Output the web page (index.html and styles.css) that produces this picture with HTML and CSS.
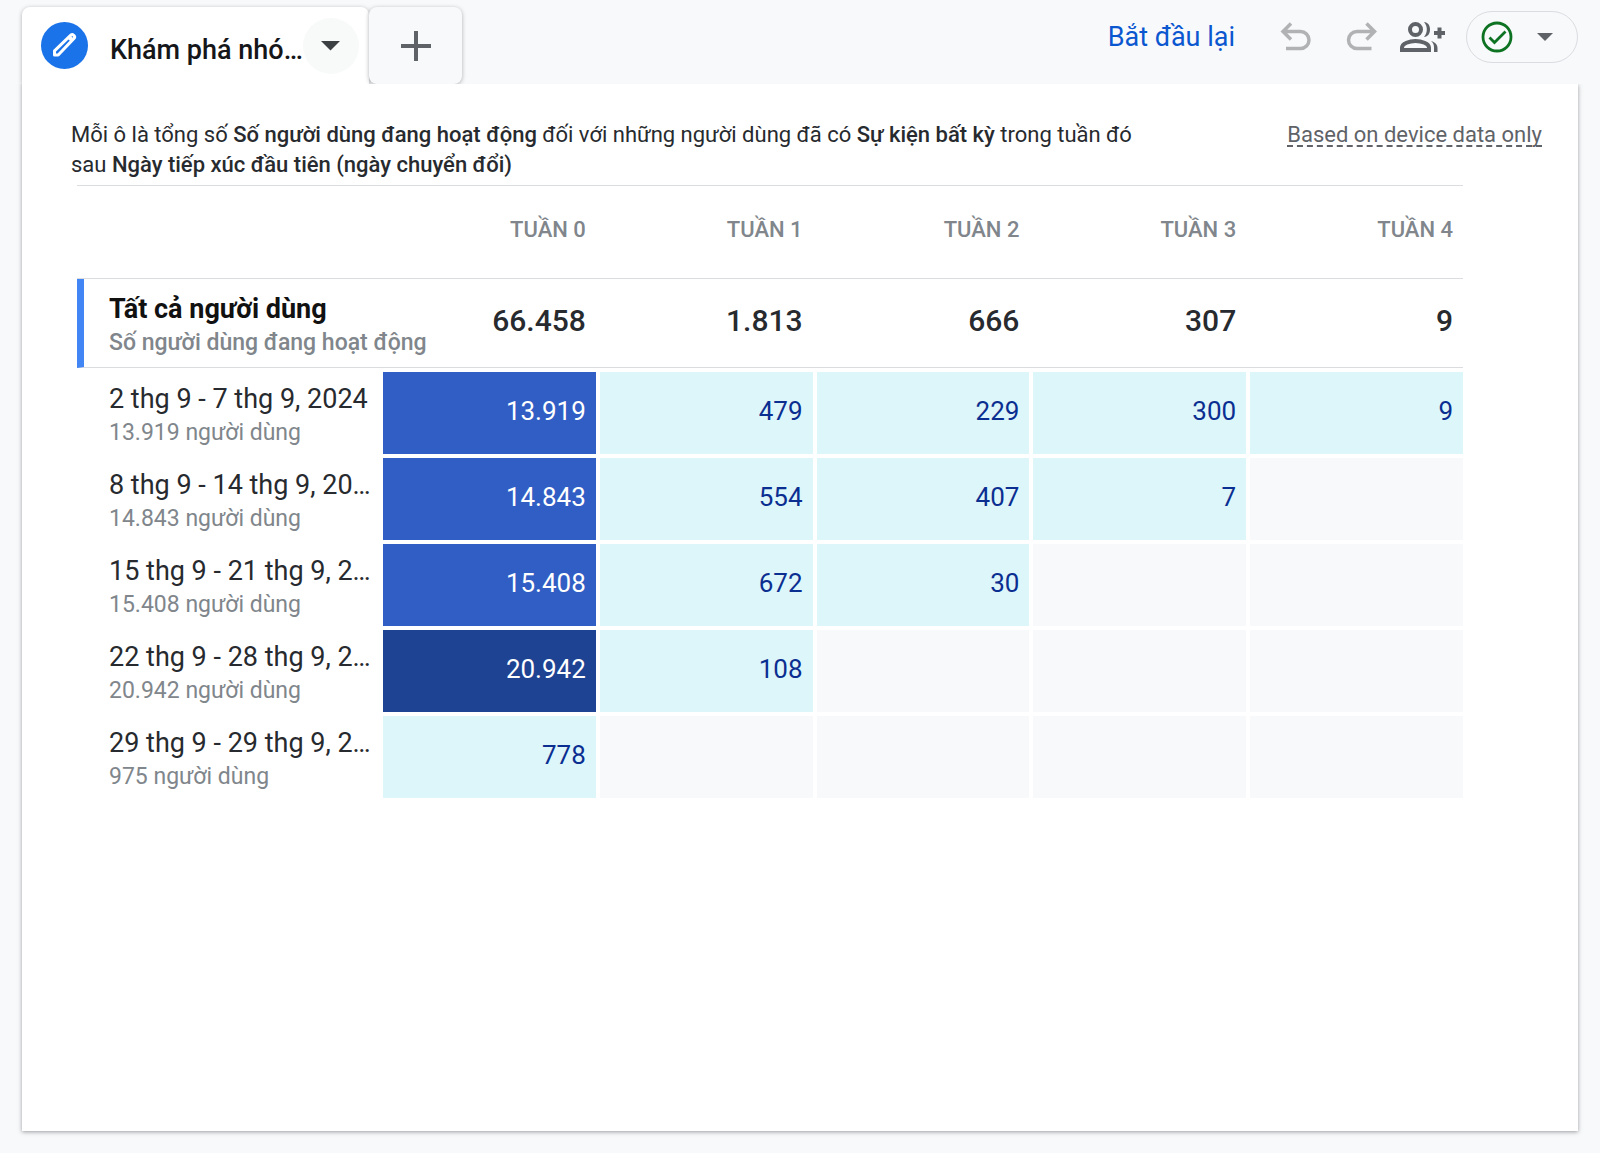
FILE: index.html
```html
<!DOCTYPE html>
<html lang="vi">
<head>
<meta charset="utf-8">
<meta name="viewport" content="width=device-width, initial-scale=1">
<title>Khám phá nhóm</title>
<link rel="stylesheet" href="styles.css">
</head>
<body>
<header class="topbar">
  <nav class="tabs" aria-label="Tab">
    <div class="tab tab-active">
      <span class="tab-badge">
        <svg width="46" height="46" viewBox="0 0 46 46" fill="none" stroke="#fff" stroke-width="3" stroke-linejoin="round" aria-hidden="true">
          <path d="M13.500 33v-4.200L29.800 13.200a2 2 0 0 1 2.800 0l.4.400a2 2 0 0 1 0 2.800L17.200 33z"/>
          <path d="M28 15l3.500 3.500" stroke-width="4"/>
        </svg>
      </span>
      <span class="tab-name">Khám phá nhó…</span>
      <button class="tab-menu" type="button" aria-label="Trình đơn tab">
        <svg width="20" height="10" viewBox="0 0 20 10" aria-hidden="true"><path d="M0 0h19l-9.500 9.500z" fill="#3c4043"/></svg>
      </button>
    </div>
    <button class="tab tab-add" type="button" aria-label="Thêm tab">
      <svg width="30" height="30" viewBox="0 0 30 30" aria-hidden="true"><path d="M15 0v30M0 15h30" stroke="#5f6368" stroke-width="4"/></svg>
    </button>
  </nav>
  <div class="actions">
    <button class="restart" type="button">Bắt đầu lại</button>
    <button class="icon-button" type="button" aria-label="Hoàn tác" disabled>
      <svg width="32" height="32" viewBox="0 0 32 32" fill="none" stroke="#b0b2b4" stroke-width="3.500" aria-hidden="true"><path d="M12 2.500L4 10.500l8 8M4 10.500h17.500a8.500 8.500 0 0 1 0 17H7"/></svg>
    </button>
    <button class="icon-button" type="button" aria-label="Làm lại" disabled>
      <svg width="32" height="32" viewBox="0 0 32 32" fill="none" stroke="#b0b2b4" stroke-width="3.500" aria-hidden="true"><path d="M20.500 2.500l8 8-8 8M28.500 10.500H11a8.500 8.500 0 0 0 0 17h14.500"/></svg>
    </button>
    <button class="icon-button icon-share" type="button" aria-label="Chia sẻ">
      <svg width="46" height="32" viewBox="0 0 46 32" fill="none" stroke="#5f6368" stroke-width="4" aria-hidden="true">
        <circle cx="15.500" cy="8.500" r="5.500"/>
        <path d="M2 29v-2.500c0-4 7.500-6.500 13.500-6.500S29 22.500 29 26.500V29z"/>
        <path d="M24 1c8 0 8 15 0 15 3.800-4.500 3.800-10.500 0-15z" fill="#5f6368" stroke="none"/>
        <path d="M31 20c4.500 1.500 6.500 3.500 6.500 7v4H34v-4.500c0-2.800-1-4.800-3-6.500z" fill="#5f6368" stroke="none"/>
        <path d="M39.500 6.500v11M34 12h11"/>
      </svg>
    </button>
    <button class="status" type="button" aria-label="Trạng thái dữ liệu">
      <svg width="32" height="32" viewBox="0 0 32 32" fill="none" stroke="#0d7322" stroke-width="2.800" aria-hidden="true"><circle cx="16" cy="16" r="14"/><path d="M8.500 16.500l5 5L24.500 10.500"/></svg>
      <svg width="16" height="8" viewBox="0 0 16 8" aria-hidden="true"><path d="M0 0h16l-8 8z" fill="#5f6368"/></svg>
    </button>
  </div>
</header>
<main class="panel">
  <div class="intro">
    <p class="summary">Mỗi ô là tổng số <b>Số người dùng đang hoạt động</b> đối với những người dùng đã có <b>Sự kiện bất kỳ</b> trong tuần đó sau <b>Ngày tiếp xúc đầu tiên (ngày chuyển đổi)</b></p>
    <a class="source" href="#">Based on device data only</a>
  </div>
  <table class="cohort">
    <thead>
      <tr><td></td><th scope="col">TUẦN 0</th><th scope="col">TUẦN 1</th><th scope="col">TUẦN 2</th><th scope="col">TUẦN 3</th><th scope="col">TUẦN 4</th></tr>
    </thead>
    <tbody>
      <tr class="total"><th scope="row"><span class="name">Tất cả người dùng</span><span class="note">Số người dùng đang hoạt động</span></th><td>66.458</td><td>1.813</td><td>666</td><td>307</td><td>9</td></tr>
      <tr class="week"><th scope="row"><span class="name">2 thg 9 - 7 thg 9, 2024</span><span class="note">13.919 người dùng</span></th><td class="high">13.919</td><td class="low">479</td><td class="low">229</td><td class="low">300</td><td class="low">9</td></tr>
      <tr class="week"><th scope="row"><span class="name">8 thg 9 - 14 thg 9, 20…</span><span class="note">14.843 người dùng</span></th><td class="high">14.843</td><td class="low">554</td><td class="low">407</td><td class="low">7</td><td></td></tr>
      <tr class="week"><th scope="row"><span class="name">15 thg 9 - 21 thg 9, 2…</span><span class="note">15.408 người dùng</span></th><td class="high">15.408</td><td class="low">672</td><td class="low">30</td><td></td><td></td></tr>
      <tr class="week"><th scope="row"><span class="name">22 thg 9 - 28 thg 9, 2…</span><span class="note">20.942 người dùng</span></th><td class="peak">20.942</td><td class="low">108</td><td></td><td></td><td></td></tr>
      <tr class="week"><th scope="row"><span class="name">29 thg 9 - 29 thg 9, 2…</span><span class="note">975 người dùng</span></th><td class="low">778</td><td></td><td></td><td></td><td></td></tr>
    </tbody>
  </table>
</main>
</body>
</html>
```
FILE: styles.css
```css
* { box-sizing: border-box; }

body {
  margin: 0;
  min-height: 100vh;
  padding: 0 22px 22px;
  display: flex;
  flex-direction: column;
  background: #f8f9fb;
  color: #272a2e;
  font-family: Roboto, "Noto Sans", sans-serif;
  font-size: 22px;
}

button {
  padding: 0;
  border: 0;
  background: none;
  color: inherit;
  font: inherit;
  cursor: pointer;
}

svg { display: block; flex: none; }

.topbar {
  display: flex;
  justify-content: space-between;
  height: 84px;
}

.tabs {
  display: flex;
  padding-top: 7px;
}

.tab {
  display: flex;
  align-items: center;
  box-shadow: 0 1px 4px rgba(60, 64, 67, 0.4);
}

.tab-active {
  width: 347px;
  padding: 0 10px 0 19px;
  border-radius: 8px 8px 0 0;
  background: #fff;
}

.tab-badge {
  flex: none;
  width: 47px;
  height: 47px;
  border-radius: 50%;
  background: #1a73e8;
}

.tab-name {
  flex: 1;
  padding: 8px 0 0 22px;
  color: #151619;
  font-size: 27px;
  font-weight: 500;
  line-height: 32px;
  white-space: nowrap;
}

.tab-menu {
  display: grid;
  place-items: center;
  width: 56px;
  height: 56px;
  border-radius: 50%;
  background: #f8f9f9;
}

.tab-add {
  justify-content: center;
  width: 93px;
  border-radius: 8px;
  background: #f8f9fb;
}

.actions {
  display: flex;
  align-items: center;
  height: 74px;
}

.restart {
  margin-right: 44px;
  color: #0b57d0;
  font-size: 27px;
  line-height: 32px;
}

.icon-button { margin-right: 35px; }
.icon-button + .icon-button { margin-right: 22px; }
.icon-button + .icon-share { margin-right: 20px; }

.status {
  display: flex;
  align-items: center;
  justify-content: space-between;
  width: 112px;
  height: 52px;
  padding: 0 24px 0 14px;
  border: 1px solid #dadce0;
  border-radius: 26px;
}

.panel {
  position: relative;
  flex: 1;
  padding: 36px 36px 36px 49px;
  background: #fff;
  box-shadow: 0 1px 4px rgba(60, 64, 67, 0.5);
  clip-path: inset(0 -8px -8px -8px);
}

.intro {
  display: flex;
  justify-content: space-between;
  align-items: flex-start;
  line-height: 30px;
}

.summary {
  max-width: 1100px;
  margin: 0;
}

.summary b { font-weight: 500; }

.source {
  color: #5f6368;
  text-decoration: underline dashed 2px;
  text-decoration-skip-ink: none;
  text-underline-offset: 3px;
}

.cohort {
  width: calc(100% - 85px);
  margin: 5px 0 0 6px;
  border-spacing: 0;
  table-layout: fixed;
  font-size: 26px;
  text-align: right;
}

.cohort th, .cohort td { padding: 0 10px 0 0; }

.cohort thead td, .cohort thead th {
  height: 94px;
  padding-bottom: 6px;
  border-top: 1px solid #dadce0;
  border-bottom: 1px solid #dadce0;
}

.cohort thead td { width: 302px; }

.cohort thead th {
  color: #80868b;
  font-size: 22px;
  font-weight: 500;
}

.cohort tbody th {
  text-align: left;
  white-space: nowrap;
}

.name, .note { display: block; }

.name {
  font-size: 27px;
  line-height: 34px;
}

.note {
  color: #80868b;
  font-size: 23px;
  line-height: 34px;
}

.total th, .total td {
  height: 89px;
  border-bottom: 1px solid #dadce0;
}

.cohort .total th {
  padding: 6px 0 0 25px;
  border-left: 7px solid #4285f4;
  font-weight: 500;
}

.total .name {
  color: #111;
  font-weight: 700;
}

.cohort .total td {
  padding-bottom: 6px;
  font-size: 30px;
  font-weight: 500;
}

.week th, .week td {
  height: 86px;
  border-top: 4px solid transparent;
  background-clip: padding-box;
}

.cohort .week th {
  padding: 6px 0 0 32px;
  font-weight: 400;
}

.cohort .week td {
  padding-bottom: 4px;
  border-left: 4px solid transparent;
  background-color: #f8f9fb;
}

.cohort .week .low {
  background-color: #dcf6fa;
  color: #0b2e91;
}

.cohort .week .high {
  background-color: #305ec4;
  color: #fff;
}

.cohort .week .peak {
  background-color: #1e4393;
  color: #fff;
}
```
